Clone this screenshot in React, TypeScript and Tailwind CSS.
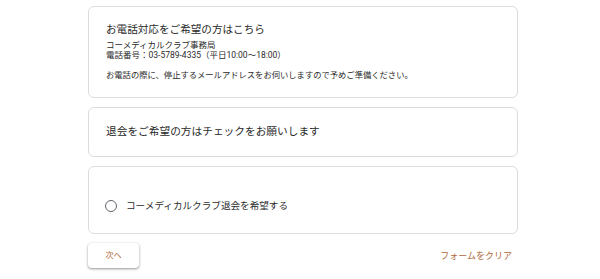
import React from "react";

export default function App() {
  const font = { fontFamily: 'Roboto, "Noto Sans CJK JP", sans-serif' };
  return (
    <div className="w-[600px] h-[279px] bg-white overflow-hidden text-[#202124]" style={font}>
      <div className="ml-[88px] w-[430px] pt-[6px] flex flex-col gap-[9px]">
        <div className="h-[92px] border border-[#dadce0] rounded-[6px] pl-[17px] pt-[15px]">
          <div className="text-[10.6px] leading-[16px] text-[#2a2a2a]">お電話対応をご希望の方はこちら</div>
          <div className="mt-[2px] text-[8.3px] leading-[10px] text-[#2a2a2a]">
            <div className="text-[8.5px]">コーメディカルクラブ事務局</div>
            <div className="text-[8.5px]">電話番号：03-5789-4335（平日10:00～18:00）</div>
            <div className="mt-[10px]">お電話の際に、停止するメールアドレスをお伺いしますので予めご準備ください。</div>
          </div>
        </div>
        <div className="h-[50px] border border-[#dadce0] rounded-[6px] pl-[17px] flex items-center">
          <div className="text-[10.7px] leading-[16px] text-[#2a2a2a]">退会をご希望の方はチェックをお願いします</div>
        </div>
        <div className="h-[68px] border border-[#dadce0] rounded-[6px] pl-[16px] pt-[32px]">
          <div className="flex items-center gap-[9px] h-[14px]">
            <div className="w-[12px] h-[12px] rounded-full border-[1.5px] border-[#5f6368]" />
            <div className="text-[9.6px] leading-[14px] text-[#2a2a2a]">コーメディカルクラブ退会を希望する</div>
          </div>
        </div>
        <div className="flex items-center justify-between h-[25px] pr-[6px]">
          <div className="w-[51px] h-[25px] rounded-[4px] bg-white shadow-[0_1px_2px_rgba(0,0,0,0.3),0_1px_3px_1px_rgba(0,0,0,0.1)] flex items-center justify-center text-[8px] text-[#b0683a]">
            次へ
          </div>
          <div className="text-[9px] text-[#b0683a] mt-[2px]">フォームをクリア</div>
        </div>
      </div>
    </div>
  );
}
